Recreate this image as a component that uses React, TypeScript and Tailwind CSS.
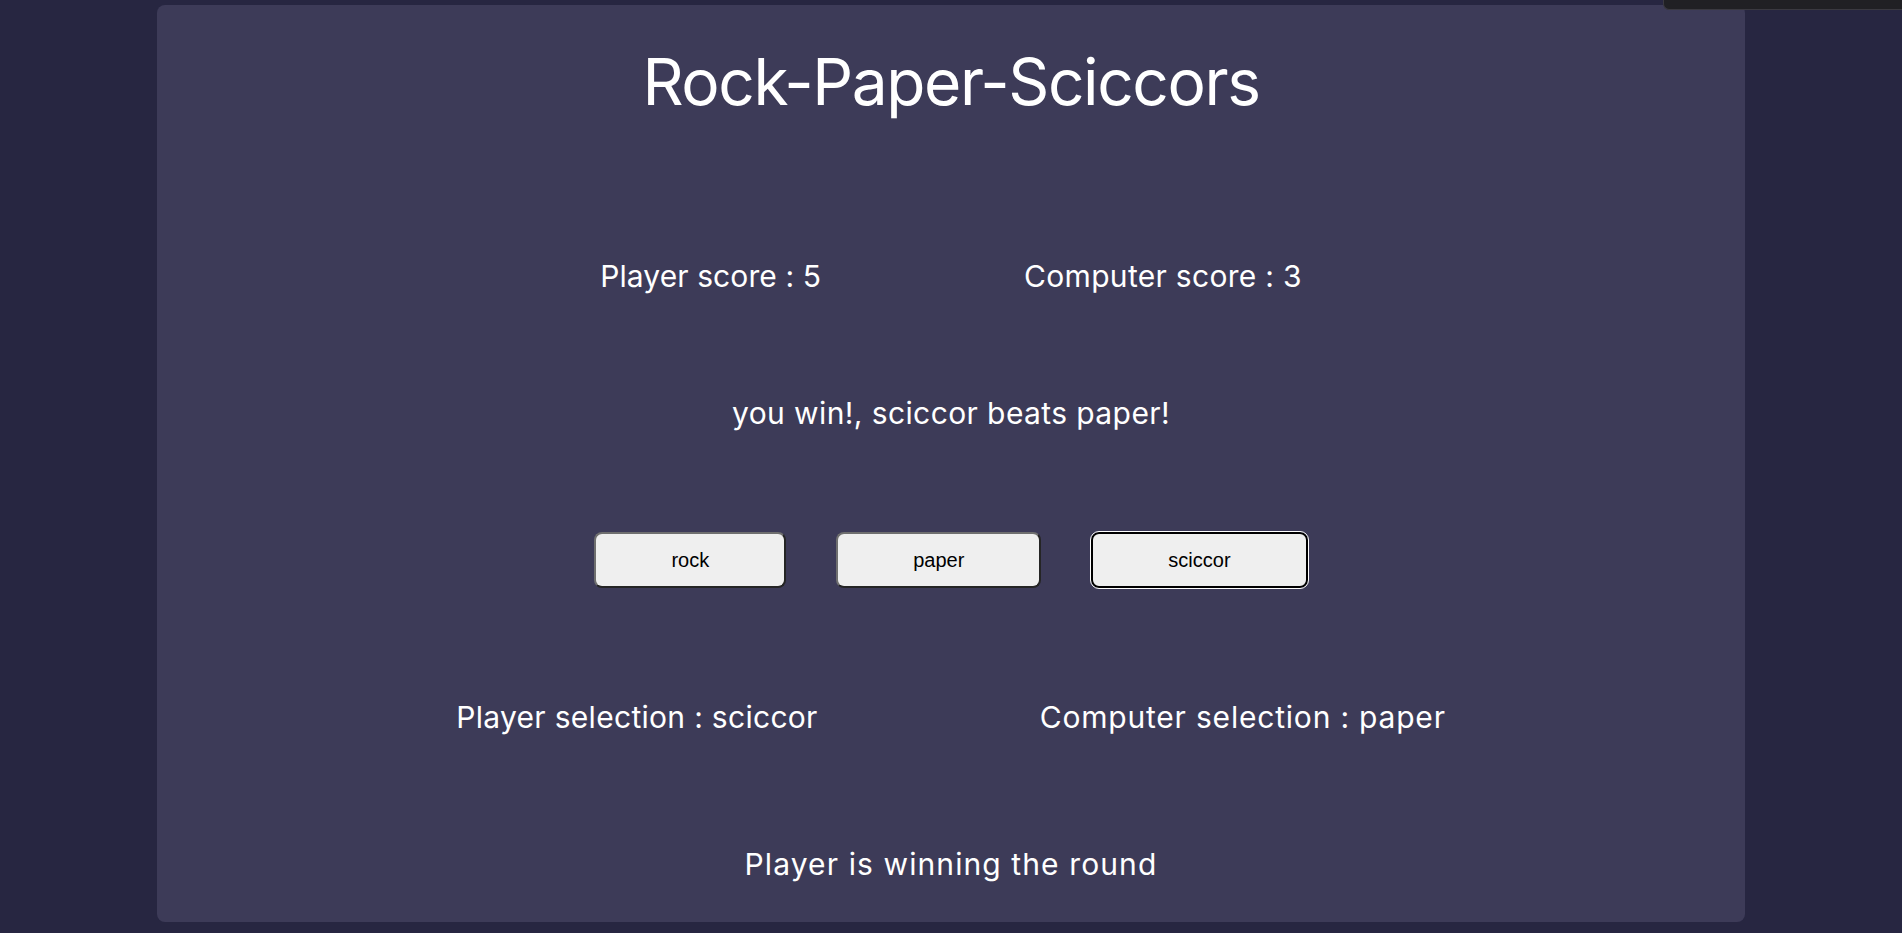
import { useState } from 'react';

const choices = ['rock', 'paper', 'sciccor'];

export default function App() {
  const [selected] = useState('sciccor');

  return (
    <div className="relative min-h-[933px] bg-[#272641] pt-[5px] font-['Inter',sans-serif] text-white">
      {/* browser overlay top right */}
      <div className="absolute top-0 right-0 h-[10px] w-[239px] rounded-bl-md border-b border-l border-[#3a3940] bg-[#202024]" />

      <div className="mx-auto flex h-[917px] w-[1588px] flex-col items-center rounded-lg bg-[#3d3b58]">
        <h1 className="mt-[37px] flex h-[80px] items-center text-[64px] font-normal tracking-[-1.4px]">
          Rock-Paper-Sciccors
        </h1>

        <div className="mt-[134px] flex h-[40px] items-center gap-[203px] text-[30px] tracking-[0.3px]">
          <p className="tracking-[0.1px]">Player score : 5</p>
          <p>Computer score : 3</p>
        </div>

        <p className="mt-[97px] flex h-[40px] items-center text-[30px] tracking-[0.4px]">
          you win!, sciccor beats paper!
        </p>

        <div className="mt-[99px] flex h-[56px] items-center gap-[50px] font-['Liberation_Sans',sans-serif] text-[20px] text-black">
          {choices.map((c) => (
            <button
              key={c}
              className={
                c === selected
                  ? 'h-[56px] rounded-lg border-2 border-black bg-[#efefef] px-[75px] outline-1 outline-offset-0 outline-white'
                  : 'h-[56px] rounded-lg border-2 border-t-[#6f6f6f] border-l-[#6f6f6f] border-b-[#252525] border-r-[#252525] bg-[#efefef] px-[75px]'
              }
            >
              {c}
            </button>
          ))}
        </div>

        <div className="mt-[109px] flex h-[40px] items-center gap-[222px] text-[30px]">
          <p className="tracking-[0.3px]">Player selection : sciccor</p>
          <p className="tracking-[0.8px]">Computer selection : paper</p>
        </div>

        <p className="mt-[107px] flex h-[40px] items-center text-[30px] tracking-[1.1px]">
          Player is winning the round
        </p>
      </div>
    </div>
  );
}
